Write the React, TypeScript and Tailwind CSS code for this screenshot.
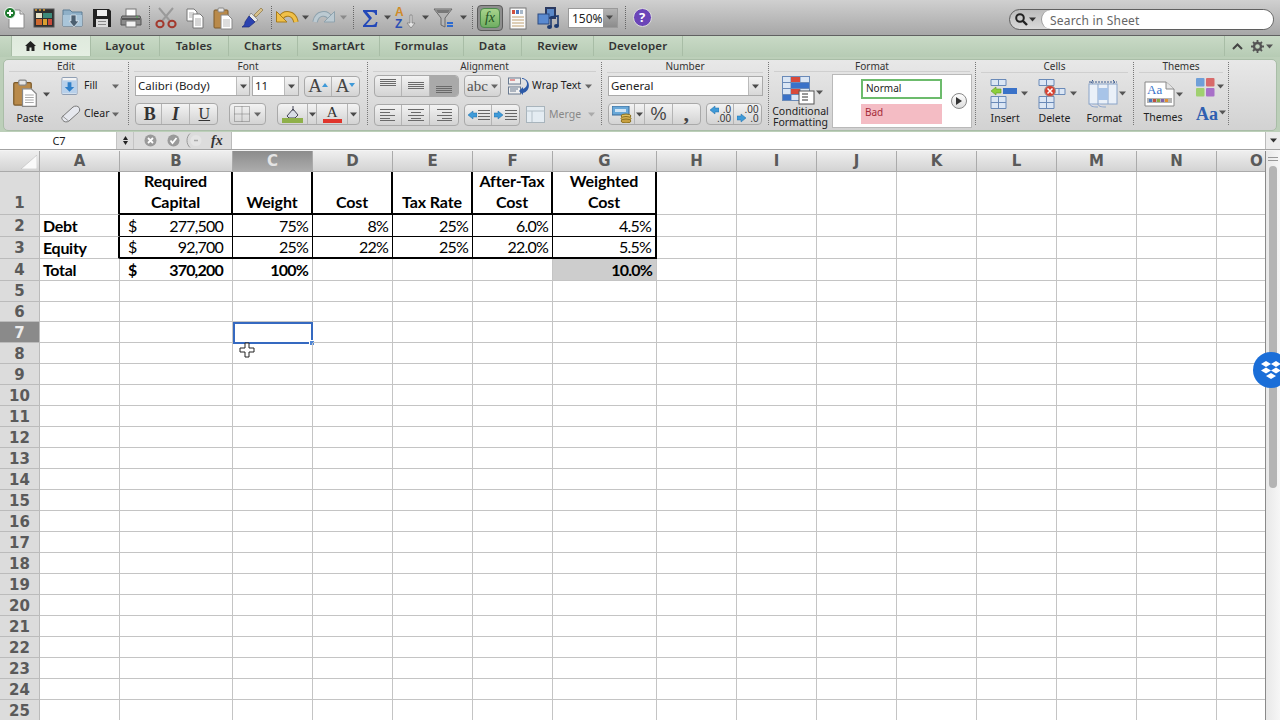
import React from "react";

const Caret = ({ c = "#4a4a4a" }: { c?: string }) => (
  <svg width="7" height="5" viewBox="0 0 7 5"><path d="M0 0.5h7L3.5 4.5z" fill={c} /></svg>
);

const Sep = ({ w }: { w: string }) => (
  <div className={`flex justify-center self-stretch py-[6px] ${w}`}>
    <div className="border-l border-dotted border-[#666]" />
  </div>
);

const Slot = ({ w, children }: { w: string; children: React.ReactNode }) => (
  <div className={`flex items-center justify-center shrink-0 ${w}`}>{children}</div>
);

const I = ({ w = 24, h = 24, children }: { w?: number; h?: number; children: React.ReactNode }) => (
  <svg width={w} height={h} viewBox={`0 0 ${w} ${h}`}>{children}</svg>
);

const NewIcon = () => (
  <I>
    <path d="M6 4h11l4 4v14H6z" fill="#fff" stroke="#8a8a8a" />
    <path d="M17 4v4h4" fill="#ddd" stroke="#8a8a8a" />
    <circle cx="7" cy="7" r="5.5" fill="#1d7a2e" stroke="#fff" />
    <path d="M7 4v6M4 7h6" stroke="#fff" strokeWidth="2" />
  </I>
);
const GalleryIcon = () => (
  <I>
    <rect x="2" y="3" width="20" height="18" fill="#2f2f2f" stroke="#555" />
    <path d="M3 4h2M7 4h2M11 4h2" stroke="#e0a030" strokeWidth="1.5" />
    <rect x="4" y="7" width="6" height="5" fill="#e8e4c8" />
    <rect x="11" y="7" width="9" height="5" fill="#3d8a7a" />
    <rect x="4" y="13" width="6" height="6" fill="#d06a30" />
    <rect x="11" y="13" width="4" height="6" fill="#d9a030" />
    <rect x="16" y="13" width="4" height="6" fill="#c84a3a" />
  </I>
);
const OpenIcon = () => (
  <I>
    <path d="M2 7V4h7l2 2h10v14H2z" fill="#8fb0c8" stroke="#5d7c95" />
    <path d="M2 9h19v11H2z" fill="#a9c5d9" />
    <path d="M10 9h5v6h3l-5 6-5-6h2z" fill="#4c5f70" stroke="#e6eef4" strokeWidth=".7" />
  </I>
);
const SaveIcon = () => (
  <I>
    <path d="M3 3h16l2 2v16H3z" fill="#222" />
    <rect x="7" y="4" width="10" height="6" fill="#eee" />
    <rect x="6" y="13" width="12" height="8" fill="#ddd" />
    <rect x="8" y="15" width="8" height="1" fill="#888" />
    <rect x="8" y="18" width="8" height="1" fill="#888" />
  </I>
);
const PrintIcon = () => (
  <I>
    <rect x="7" y="3" width="10" height="8" fill="#fff" stroke="#777" />
    <path d="M3 10h18l1 3v6H2v-6z" fill="#8c8c8c" stroke="#555" />
    <rect x="3" y="12" width="18" height="2" fill="#555" />
    <rect x="7" y="15" width="10" height="6" fill="#f2f2f2" stroke="#777" />
    <rect x="17" y="10.5" width="2" height="1" fill="#4bb04b" />
  </I>
);
const CutIcon = () => (
  <I>
    <path d="M5 2l11 13M19 2L8 15" stroke="#9a9a9a" strokeWidth="2" />
    <ellipse cx="6" cy="18" rx="3.6" ry="3.2" fill="none" stroke="#a33a2e" strokeWidth="2" />
    <ellipse cx="18" cy="18" rx="3.6" ry="3.2" fill="none" stroke="#a33a2e" strokeWidth="2" />
  </I>
);
const CopyIcon = () => (
  <I>
    <path d="M4 3h7l3 3v9H4z" fill="#fff" stroke="#777" />
    <path d="M10 8h7l3 3v11H10z" fill="#fff" stroke="#777" />
    <path d="M6 7h5M6 9h3M6 11h3M12 13h6M12 15h6M12 17h6M12 19h6" stroke="#999" strokeWidth=".8" />
  </I>
);
const PasteIcon = ({ w = 24, h = 24 }: { w?: number; h?: number }) => (
  <svg width={w} height={h} viewBox="0 0 24 24">
    <rect x="3" y="4" width="14" height="18" rx="1" fill="#b98a4a" stroke="#7c5a2a" />
    <rect x="7" y="2" width="6" height="4" rx="1" fill="#e6e6e6" stroke="#888" />
    <path d="M10 9h7l4 4v10H10z" fill="#fff" stroke="#888" />
    <path d="M12 14h7M12 16h7M12 18h7M12 20h7" stroke="#aaa" strokeWidth=".8" />
  </svg>
);
const BrushIcon = () => (
  <I>
    <path d="M14 9l7-7 2 2-7 7z" fill="#d8c08a" stroke="#8a7440" strokeWidth=".7" />
    <path d="M11 7l7 7-3 2-6-6z" fill="#e8e8e8" stroke="#777" strokeWidth=".7" />
    <path d="M9 10l6 6-6 5H2c2-1 3-3 3-5z" fill="#2c43b0" stroke="#1c2c7c" strokeWidth=".7" />
  </I>
);
const UndoIcon = () => (
  <I w={26} h={22}>
    <path d="M7 11C10 5 20 5 22 15" fill="none" stroke="#a87c1c" strokeWidth="5.500" />
    <path d="M7 11C10 5 20 5 22 15" fill="none" stroke="#f0c048" strokeWidth="3.500" />
    <path d="M2.500 4.500v10.500h10.500z" fill="#f0c048" stroke="#a87c1c" />
  </I>
);
const RedoIcon = () => (
  <I w={26} h={22}>
    <path d="M19 11C16 5 6 5 4 15" fill="none" stroke="#8ea2ad" strokeWidth="5.500" />
    <path d="M19 11C16 5 6 5 4 15" fill="none" stroke="#bccad2" strokeWidth="3.500" />
    <path d="M23.500 4.500v10.500H13z" fill="#bccad2" stroke="#8ea2ad" />
  </I>
);
const SigmaIcon = () => (
  <I w={20} h={22}>
    <path d="M3 3h14v5h-1.500c-.5-2-1.500-3-4-3H7l5 6-6 7h6c2.500 0 3.500-1 4-3H17.500L16.500 20H3v-1.500L9 12 3 4.500z" fill="#2348b8" />
  </I>
);
const SortIcon = () => (
  <svg width="24" height="26" viewBox="0 0 24 26">
    <text x="1" y="11" fontSize="12" fontWeight="700" fontFamily="Liberation Sans" fill="#d08a28">A</text>
    <text x="1" y="23" fontSize="12" fontWeight="700" fontFamily="Liberation Sans" fill="#2c50b4">Z</text>
    <path d="M16 10h2v8h3l-4 5-4-5h3z" fill="#e4e4e4" stroke="#777" strokeWidth=".7" />
  </svg>
);
const FilterIcon = () => (
  <I w={22} h={22}>
    <path d="M1 2h18l-7 9v9l-4-2v-7z" fill="#b4b4b4" stroke="#6a6a6a" />
    <path d="M3 3h14l-2 3H5z" fill="#777" />
    <path d="M14 16h6M14 19h6" stroke="#2c6ad0" strokeWidth="2" />
  </I>
);
const DocIcon = () => (
  <I>
    <rect x="4" y="2" width="16" height="21" fill="#fbfbfb" stroke="#777" />
    <rect x="6" y="4" width="3" height="4" fill="#d05040" />
    <rect x="10" y="4" width="3" height="4" fill="#4a78c0" />
    <rect x="14" y="4" width="3" height="4" fill="#a8b8c8" />
    <path d="M6 11h12M6 14h12M6 17h12M6 20h12" stroke="#bfa070" strokeWidth="1" />
  </I>
);
const MediaIcon = () => (
  <I w={26} h={26}>
    <rect x="9" y="2" width="11" height="12" fill="#2c3a60" />
    <rect x="11" y="4" width="7" height="8" fill="#5a88c8" />
    <rect x="2" y="9" width="11" height="10" fill="#5a8ad0" stroke="#2c4a80" />
    <path d="M15 22V12l7-1v10" fill="none" stroke="#1c3a70" strokeWidth="1.600" />
    <ellipse cx="13.500" cy="22" rx="2.500" ry="2" fill="#1c3a70" />
    <ellipse cx="20.500" cy="21" rx="2.500" ry="2" fill="#1c3a70" />
  </I>
);

const BtnGroup = ({ cls = "", children }: { cls?: string; children: React.ReactNode }) => (
  <div className={`flex rounded-[4px] border border-[#a9a9a9] bg-gradient-to-b from-[#f3f3f3] to-[#d3d3d3] divide-x divide-[#b4b4b4] overflow-hidden ${cls}`}>
    {children}
  </div>
);
const Cbtn = ({ w, cls = "", children }: { w: string; cls?: string; children?: React.ReactNode }) => (
  <div className={`flex items-center justify-center h-full ${w} ${cls}`}>{children}</div>
);

const Lines = ({ a }: { a: "l" | "c" | "r" | "t" | "m" | "b" }) => {
  const rows =
    a === "l" ? ["M1 1.500h15", "M1 4.500h10", "M1 7.500h15", "M1 10.500h10", "M1 12.500h15"] :
    a === "c" ? ["M1 1.500h16", "M4 4.500h10", "M1 7.500h16", "M4 10.500h10", "M1 12.500h16"] :
    a === "r" ? ["M2 1.500h15", "M7 4.500h10", "M2 7.500h15", "M7 10.500h10", "M2 12.500h15"] :
    a === "t" ? ["M1 0.500h16", "M1 2.500h16", "M1 4.500h16", "M1 6.500h16"] :
    a === "m" ? ["M1 3.500h16", "M1 5.500h16", "M1 7.500h16", "M1 9.500h16"] :
    ["M1 7.500h16", "M1 9.500h16", "M1 11.500h16", "M1 13.500h16"];
  return (
    <svg width="18" height="14" viewBox="0 0 18 14">
      {rows.map((d) => <path key={d} d={d} stroke="#6a6a6a" strokeWidth="1" />)}
    </svg>
  );
};

const Group = ({ w, title, sep = true, children }: { w: string; title: string; sep?: boolean; children: React.ReactNode }) => (
  <div className={`flex flex-col shrink-0 ${w} ${sep ? "border-r border-dotted border-[#777]" : ""}`}>
    <div className="mx-[5px] h-[11px] border-b border-[#cfcfcf] text-center text-[10px] leading-[9px] text-[#333]">{title}</div>
    {children}
  </div>
);

const Arrow = ({ d }: { d: string }) => (
  <svg width="10" height="10" viewBox="0 0 10 10"><path d={d} fill="#3f9ad8" stroke="#1f6fa8" strokeWidth=".5" /></svg>
);

const colLetters = ["A", "B", "C", "D", "E", "F", "G", "H", "I", "J", "K", "L", "M", "N", "O"];

type Cell = { t?: string; t2?: string; cur?: string; b?: boolean; al?: "r" | "c" | "l"; bg?: string };

const data: Record<string, Cell> = {
  "1B": { t: "Required", t2: "Capital", b: true, al: "c" },
  "1C": { t: "Weight", b: true, al: "c" },
  "1D": { t: "Cost", b: true, al: "c" },
  "1E": { t: "Tax Rate", b: true, al: "c" },
  "1F": { t: "After-Tax", t2: "Cost", b: true, al: "c" },
  "1G": { t: "Weighted", t2: "Cost", b: true, al: "c" },
  "2A": { t: "Debt", b: true, al: "l" },
  "2B": { t: "277,500", cur: "$", al: "r" },
  "2C": { t: "75%", al: "r" },
  "2D": { t: "8%", al: "r" },
  "2E": { t: "25%", al: "r" },
  "2F": { t: "6.0%", al: "r" },
  "2G": { t: "4.5%", al: "r" },
  "3A": { t: "Equity", b: true, al: "l" },
  "3B": { t: "92,700", cur: "$", al: "r" },
  "3C": { t: "25%", al: "r" },
  "3D": { t: "22%", al: "r" },
  "3E": { t: "25%", al: "r" },
  "3F": { t: "22.0%", al: "r" },
  "3G": { t: "5.5%", al: "r" },
  "4A": { t: "Total", b: true, al: "l" },
  "4B": { t: "370,200", cur: "$", b: true, al: "r" },
  "4C": { t: "100%", b: true, al: "r" },
  "4G": { t: "10.0%", b: true, al: "r", bg: "bg-[#cdcdcd]" },
};

const inTable = (c: string) => "BCDEFG".includes(c);

function borderCls(r: number, c: string) {
  let right = "border-r border-r-[#c4c4c4]";
  let bottom = "border-b border-b-[#c4c4c4]";
  if (r >= 1 && r <= 3) {
    if (c === "A" || c === "G") right = "border-r-2 border-r-black";
    else if (inTable(c)) right = r === 1 ? "border-r-2 border-r-black" : "border-r border-r-black";
    if (inTable(c)) {
      if (r === 1 || r === 3) bottom = "border-b-2 border-b-black";
      else bottom = "border-b border-b-black";
    }
  }
  return `${right} ${bottom}`;
}

function CellView({ r, c }: { r: number; c: string }) {
  const d = data[`${r}${c}`];
  const sel = r === 7 && c === "C";
  let pad = "pl-[3px] pr-[4px]";
  if (c === "B") pad = "pl-[8px] pr-[9px]";
  if (r === 1) pad = "";
  const just = d?.al === "r" ? "justify-end" : d?.al === "c" ? "justify-center" : "justify-start";
  const track = d?.al === "r" ? "tracking-[-0.8px]" : d?.al === "l" ? "tracking-[-0.3px]" : "tracking-[-0.1px]";
  return (
    <div className={`relative flex items-end leading-[21px] min-w-0 text-[16px] text-black font-['Lato',sans-serif] ${d?.b ? "font-bold" : "font-normal"} ${d?.bg ?? ""} ${borderCls(r, c)}`}>
      {d && !d.t2 && (
        <div className={`flex w-full ${just} ${pad} ${r === 1 ? "pb-[1px]" : ""}`}>
          {d.cur && <span className="mr-auto">{d.cur}</span>}
          <span className={`whitespace-nowrap ${track}`}>{d.t}</span>
        </div>
      )}
      {d?.t2 && (
        <div className="w-full pb-[1px] text-center whitespace-nowrap tracking-[-0.1px]">
          <div>{d.t}</div>
          <div>{d.t2}</div>
        </div>
      )}
      {sel && (
        <div className="absolute left-0 top-0 w-[80px] h-[22px] border-2 border-[#3569c0]">
          <div className="absolute right-[-4px] bottom-[-4px] w-[6px] h-[6px] bg-[#4f86d6] border border-white" />
        </div>
      )}
    </div>
  );
}

export default function App() {
  const rows = Array.from({ length: 25 }, (_, i) => i + 1);
  return (
    <div className="relative w-[1280px] h-[720px] overflow-hidden bg-white font-['Noto_Sans',sans-serif] text-[#222]">
      {/* Standard toolbar */}
      <div className="flex items-center h-[36px] bg-gradient-to-b from-[#d0d0d0] to-[#a7a7a7] border-b border-[#616161]">
        <Slot w="w-[30px]"><NewIcon /></Slot>
        <Slot w="w-[28px]"><GalleryIcon /></Slot>
        <Slot w="w-[30px]"><OpenIcon /></Slot>
        <Slot w="w-[28px]"><SaveIcon /></Slot>
        <Slot w="w-[30px]"><PrintIcon /></Slot>
        <Sep w="w-[6px]" />
        <Slot w="w-[28px]"><CutIcon /></Slot>
        <Slot w="w-[30px]"><CopyIcon /></Slot>
        <Slot w="w-[26px]"><PasteIcon /></Slot>
        <Slot w="w-[32px]"><BrushIcon /></Slot>
        <Sep w="w-[6px]" />
        <Slot w="w-[26px]"><UndoIcon /></Slot>
        <Slot w="w-[10px]"><Caret /></Slot>
        <Slot w="w-[28px]"><RedoIcon /></Slot>
        <Slot w="w-[10px]"><Caret c="#8a8a8a" /></Slot>
        <Sep w="w-[10px]" />
        <Slot w="w-[24px]"><SigmaIcon /></Slot>
        <Slot w="w-[10px]"><Caret /></Slot>
        <Slot w="w-[28px]"><SortIcon /></Slot>
        <Slot w="w-[10px]"><Caret /></Slot>
        <Slot w="w-[28px]"><FilterIcon /></Slot>
        <Slot w="w-[10px]"><Caret /></Slot>
        <Sep w="w-[9px]" />
        <div className="flex items-center justify-center w-[26px] h-[26px] rounded-[4px] border border-[#5c5c5c] bg-[#8e8e8e] shrink-0">
          <div className="flex items-center justify-center w-[20px] h-[20px] rounded-[4px] border border-[#4c8a4c] bg-gradient-to-b from-[#a8d48c] to-[#6fae62] font-['Liberation_Serif',serif] italic text-[14px] text-[#1f4f1f]">fx</div>
        </div>
        <Slot w="w-[30px]"><DocIcon /></Slot>
        <Slot w="w-[32px]"><MediaIcon /></Slot>
        <div className="flex ml-[3px] w-[50px] h-[20px] shrink-0 border border-[#9a9a9a] bg-white">
          <div className="flex-1 text-[12px] leading-[19px] pl-[3px] text-[#222]">150%</div>
          <div className="flex items-center justify-center w-[15px] bg-gradient-to-b from-[#b4b4b4] to-[#8c8c8c]"><Caret /></div>
        </div>
        <Sep w="w-[14px]" />
        <Slot w="w-[20px]">
          <div className="flex items-center justify-center w-[19px] h-[19px] rounded-full border border-[#ddd] bg-[#6b45b8] text-white font-bold text-[13px] leading-none">?</div>
        </Slot>
        <div className="flex-1" />
        <div className="flex items-center w-[265px] h-[21px] mr-[6px] mt-[4px] shrink-0 rounded-full border border-[#5f5f5f] bg-gradient-to-b from-[#bdbdbd] to-[#d9d9d9]">
          <div className="flex items-center w-[31px] pl-[5px] gap-[1px]">
            <svg width="13" height="13" viewBox="0 0 13 13"><circle cx="5" cy="5" r="3.800" fill="none" stroke="#222" strokeWidth="2" /><path d="M8 8l4 4" stroke="#222" strokeWidth="2.400" /></svg>
            <Caret c="#333" />
          </div>
          <div className="flex-1 h-[19px] rounded-full bg-white border-l border-[#999] pl-[8px] text-[12px] leading-[21px] tracking-[0.2px] text-[#666]">Search in Sheet</div>
        </div>
      </div>

      {/* Tabs */}
      <div className="flex items-stretch h-[21px] pl-[11px] pb-[1px] bg-gradient-to-b from-[#c9dac6] to-[#b6cbb4] text-[11.5px] font-semibold tracking-[0.2px] text-[#333]">
        <div className="flex items-center justify-center gap-[7px] w-[80px] bg-gradient-to-b from-[#dfeadd] to-[#e4eee2] border-r border-l border-[#a8bda6] text-[#222]">
          <svg width="11" height="10" viewBox="0 0 11 10"><path d="M5.500 0L11 5H9.500v5H6.500V6.500h-2V10H1.500V5H0z" fill="#222" /></svg>
          <span>Home</span>
        </div>
        <div className="flex items-center justify-center w-[69px] border-r border-[#a8bda6]">Layout</div>
        <div className="flex items-center justify-center w-[69px] border-r border-[#a8bda6]">Tables</div>
        <div className="flex items-center justify-center w-[69px] border-r border-[#a8bda6]">Charts</div>
        <div className="flex items-center justify-center w-[82px] border-r border-[#a8bda6]">SmartArt</div>
        <div className="flex items-center justify-center w-[84px] border-r border-[#a8bda6]">Formulas</div>
        <div className="flex items-center justify-center w-[58px] border-r border-[#a8bda6]">Data</div>
        <div className="flex items-center justify-center w-[72px] border-r border-[#a8bda6]">Review</div>
        <div className="flex items-center justify-center w-[89px] border-r border-[#a8bda6]">Developer</div>
        <div className="flex-1" />
        <div className="flex items-center w-[56px] border-l border-[#a8bda6]">
          <svg className="ml-[7px]" width="11" height="7" viewBox="0 0 11 7"><path d="M1 6l4.500-4.500L10 6" fill="none" stroke="#444" strokeWidth="2" /></svg>
          <svg className="ml-[8px]" width="13" height="13" viewBox="0 0 13 13"><circle cx="6.500" cy="6.500" r="3.500" fill="none" stroke="#555" strokeWidth="2.400" /><path d="M6.500 0v3M6.500 10v3M0 6.500h3M10 6.500h3M2 2l2 2M9 9l2 2M11 2L9 4M4 9l-2 2" stroke="#555" strokeWidth="1.800" /></svg>
          <span className="ml-[2px]"><Caret c="#555" /></span>
        </div>
      </div>

      {/* Ribbon */}
      <div className="h-[75px] bg-[#bccfb9] px-[3px] pt-[2px] pb-[1px]">
        <div className="flex h-full pt-[2px] pb-[5px] rounded-[5px] border border-[#a9bda7] bg-gradient-to-b from-[#e8e8e8] to-[#d2d2d2] text-[#222]">
          {/* Edit */}
          <Group w="w-[125px]" title="Edit">
            <div className="flex">
              <div className="flex flex-col items-center w-[44px] ml-[4px]">
                <div className="flex items-center mt-[5px]">
                  <PasteIcon w={30} h={31} />
                  <span className="ml-[3px] mt-[3px]"><Caret /></span>
                </div>
                <div className="text-[10.5px] leading-[14px] mt-[3px]">Paste</div>
              </div>
              <div className="flex flex-col ml-[9px]">
                <div className="flex items-center h-[26px] mt-[1px]">
                  <svg width="17" height="20" viewBox="0 0 18 20"><rect x="1" y="1" width="16" height="18" rx="1" fill="#f4f4f4" stroke="#8a9ab0" /><rect x="1" y="4" width="16" height="14" fill="#b8d0ea" /><path d="M7 6h4v5h3l-5 5-5-5h3z" fill="#2f7fc8" /></svg>
                  <span className="ml-[6px] w-[28px] text-[10.5px]">Fill</span>
                  <Caret c="#666" />
                </div>
                <div className="flex items-center h-[28px] mt-[1px]">
                  <svg width="20" height="18" viewBox="0 0 20 18"><path d="M1 12L12 2c2-1.500 5-1 6 .5s1 3.500-.5 5L8 16c-2 1.500-5 1-6-.5s-1.500-2 -1-3.500z" fill="#e6e8ee" stroke="#777" /><path d="M1.500 11l6 5" stroke="#999" /></svg>
                  <span className="ml-[3px] w-[28px] text-[10.5px]">Clear</span>
                  <Caret c="#666" />
                </div>
              </div>
            </div>
          </Group>

          {/* Font */}
          <Group w="w-[239px]" title="Font">
            <div className="pl-[6px] pt-[4px] flex flex-col gap-[6px]">
              <div className="flex items-start">
                <div className="flex h-[20px] w-[115px] border border-[#aaa] bg-white">
                  <div className="flex-1 text-[11.5px] leading-[18px] pl-[2px]">Calibri (Body)</div>
                  <div className="flex items-center justify-center w-[13px] border-l border-[#bbb] bg-gradient-to-b from-[#f3f3f3] to-[#d8d8d8]"><Caret /></div>
                </div>
                <div className="flex h-[20px] w-[47px] ml-[2px] border border-[#aaa] bg-white">
                  <div className="flex-1 text-[11.5px] leading-[18px] pl-[2px]">11</div>
                  <div className="flex items-center justify-center w-[14px] border-l border-[#bbb] bg-gradient-to-b from-[#f3f3f3] to-[#d8d8d8]"><Caret /></div>
                </div>
                <BtnGroup cls="ml-[5px] h-[21px]">
                  <Cbtn w="w-[27px]"><span className="font-['Liberation_Serif',serif] text-[19px] text-[#444]">A</span><svg className="mb-[3px]" width="6" height="4" viewBox="0 0 6 4"><path d="M3 0l3 4H0z" fill="#3f9ad8" /></svg></Cbtn>
                  <Cbtn w="w-[27px]"><span className="font-['Liberation_Serif',serif] text-[19px] text-[#444]">A</span><svg className="mb-[3px]" width="6" height="4" viewBox="0 0 6 4"><path d="M0 0h6L3 4z" fill="#3f9ad8" /></svg></Cbtn>
                </BtnGroup>
              </div>
              <div className="flex items-start">
                <BtnGroup cls="h-[22px] w-[83px]">
                  <Cbtn w="w-[27px]" cls="pl-[2px]"><span className="font-['Liberation_Serif',serif] font-bold text-[18px] text-[#333]">B</span></Cbtn>
                  <Cbtn w="w-[28px]"><span className="font-['Liberation_Serif',serif] italic font-bold text-[18px] text-[#333]">I</span></Cbtn>
                  <Cbtn w="w-[28px]" cls="pl-[2px]"><span className="font-['Liberation_Serif',serif] underline text-[16px] text-[#333]">U</span></Cbtn>
                </BtnGroup>
                <BtnGroup cls="ml-[11px] h-[22px] w-[37px]">
                  <div className="flex items-center justify-center gap-[4px] w-full">
                    <svg width="16" height="16" viewBox="0 0 16 16"><path d="M.5.500h15v15H.5zM8 .5v15M.5 8h15" fill="none" stroke="#777" strokeDasharray="1 1" /></svg>
                    <Caret c="#666" />
                  </div>
                </BtnGroup>
                <BtnGroup cls="ml-[11px] h-[22px] w-[83px]">
                  <Cbtn w="w-[31px]">
                    <svg width="21" height="18" viewBox="0 0 21 18"><path d="M5 11l6-7 5 6-3 3H7z" fill="#d8dde6" stroke="#445" /><path d="M11 1v5" stroke="#445" /><rect x="0" y="13" width="21" height="5" fill="#8fb04a" /></svg>
                  </Cbtn>
                  <Cbtn w="w-[9px]"><Caret /></Cbtn>
                  <Cbtn w="w-[32px]">
                    <div className="flex flex-col items-center font-['Liberation_Serif',serif] text-[15px] leading-[13px] text-[#333]">A<div className="w-[19px] h-[4px] bg-[#e0352c]" /></div>
                  </Cbtn>
                  <Cbtn w="w-[11px]"><Caret /></Cbtn>
                </BtnGroup>
              </div>
            </div>
          </Group>

          {/* Alignment */}
          <Group w="w-[234px]" title="Alignment">
            <div className="pl-[6px] pt-[3px] flex flex-col gap-[6px]">
              <div className="flex items-center h-[22px]">
                <BtnGroup cls="h-[22px] w-[85px]">
                  <Cbtn w="w-[28px]"><Lines a="t" /></Cbtn>
                  <Cbtn w="w-[28px]"><Lines a="m" /></Cbtn>
                  <Cbtn w="w-[29px]" cls="bg-[#a9a9a9]"><Lines a="b" /></Cbtn>
                </BtnGroup>
                <BtnGroup cls="ml-[5px] h-[22px] w-[37px]">
                  <div className="flex items-center justify-center gap-[3px] w-full font-['Liberation_Serif',serif] text-[15px] text-[#555]">abc<Caret c="#666" /></div>
                </BtnGroup>
                <svg className="ml-[7px]" width="21" height="20" viewBox="0 0 21 20"><rect x=".5" y="2" width="12" height="6" fill="#f0f0f0" stroke="#6a7a90" /><path d="M2 4h5" stroke="#d04040" /><rect x=".5" y="11" width="12" height="7" fill="#f0f0f0" stroke="#6a7a90" /><path d="M2 13h8M2 15h6" stroke="#6a7a90" /><path d="M14 3c6 0 7 8 1 10v-2l-4 4 4 4v-2c8-2 8-14-1-15z" fill="#2c5aa8" /></svg>
                <span className="ml-[3px] text-[10.5px] w-[52px] whitespace-nowrap">Wrap Text</span>
                <span className="ml-[1px]"><Caret c="#666" /></span>
              </div>
              <div className="flex items-center h-[23px]">
                <BtnGroup cls="h-[22px] w-[85px]">
                  <Cbtn w="w-[28px]"><Lines a="l" /></Cbtn>
                  <Cbtn w="w-[28px]"><Lines a="c" /></Cbtn>
                  <Cbtn w="w-[29px]"><Lines a="r" /></Cbtn>
                </BtnGroup>
                <BtnGroup cls="ml-[5px] h-[22px] w-[56px]">
                  <Cbtn w="w-[28px]"><Arrow d="M6 1v2h4v4H6v2L1 5z" /><span className="ml-[1px]"><svg width="12" height="12" viewBox="0 0 12 12"><path d="M0 1.500h12M0 4.500h12M0 7.500h12M0 10.500h12" stroke="#666" /></svg></span></Cbtn>
                  <Cbtn w="w-[28px]"><Arrow d="M4 1v2H0v4h4v2l5-4z" /><span className="ml-[1px]"><svg width="12" height="12" viewBox="0 0 12 12"><path d="M0 1.500h12M0 4.500h12M0 7.500h12M0 10.500h12" stroke="#666" /></svg></span></Cbtn>
                </BtnGroup>
                <svg className="ml-[6px]" width="19" height="17" viewBox="0 0 19 17"><rect x=".5" y=".5" width="18" height="16" fill="#e4ecf2" stroke="#a8b4bc" /><path d="M.5 5h18M6 5v11" stroke="#b4c0c8" /></svg>
                <span className="ml-[4px] text-[10.5px] text-[#888]">Merge</span>
                <span className="ml-[7px]"><Caret c="#aaa" /></span>
              </div>
            </div>
          </Group>

          {/* Number */}
          <Group w="w-[167px]" title="Number">
            <div className="pl-[6px] pt-[3px] flex flex-col gap-[7px]">
              <div className="flex h-[20px] w-[155px] border border-[#aaa] bg-white">
                <div className="flex-1 text-[11.5px] leading-[18px] pl-[2px]">General</div>
                <div className="flex items-center justify-center w-[14px] border-l border-[#bbb] bg-gradient-to-b from-[#f3f3f3] to-[#d8d8d8]"><Caret /></div>
              </div>
              <div className="flex">
                <BtnGroup cls="h-[22px] w-[93px]">
                  <Cbtn w="w-[27px]">
                    <svg width="20" height="17" viewBox="0 0 20 17"><rect x="0" y="0" width="17" height="9" fill="#69a8d8" stroke="#3a6a98" /><rect x="3" y="3" width="11" height="3" fill="#cfe4f4" /><ellipse cx="14" cy="10" rx="5" ry="2" fill="#e0c060" stroke="#8a7020" /><ellipse cx="14" cy="12.500" rx="5" ry="2" fill="#d4b050" stroke="#8a7020" /><ellipse cx="14" cy="15" rx="5" ry="2" fill="#c8a040" stroke="#8a7020" /></svg>
                  </Cbtn>
                  <Cbtn w="w-[10px]"><Caret /></Cbtn>
                  <Cbtn w="w-[28px]"><span className="font-['Liberation_Sans',sans-serif] text-[18px] text-[#444]">%</span></Cbtn>
                  <Cbtn w="w-[28px]"><span className="font-['Liberation_Serif',serif] font-bold text-[22px] leading-[14px] text-[#444]">,</span></Cbtn>
                </BtnGroup>
                <BtnGroup cls="ml-[5px] h-[22px] w-[56px]">
                  <Cbtn w="w-[28px]"><div className="relative w-[22px] h-[18px] font-['Liberation_Sans',sans-serif] text-[10px] leading-[9px] text-[#333] text-right"><div className="absolute left-0 top-0"><Arrow d="M6 1v2h4v4H6v2L1 5z" /></div>.0<br />.00</div></Cbtn>
                  <Cbtn w="w-[28px]"><div className="relative w-[22px] h-[18px] font-['Liberation_Sans',sans-serif] text-[10px] leading-[9px] text-[#333] text-right"><div className="absolute left-0 bottom-0"><Arrow d="M4 1v2H0v4h4v2l5-4z" /></div>.00<br />.0</div></Cbtn>
                </BtnGroup>
              </div>
            </div>
          </Group>

          {/* Format */}
          <Group w="w-[207px]" title="Format">
            <div className="flex">
              <div className="flex flex-col items-center w-[63px]">
                <div className="flex items-center mt-[4px] ml-[3px]">
                  <svg width="33" height="29" viewBox="0 0 33 29">
                    <rect x=".5" y=".5" width="27" height="24" fill="#dbe6f4" stroke="#6a8ab8" />
                    <path d="M9 .5v24M18 .5v24M.5 6.500h27M.5 12.500h27M.5 18.500h27" stroke="#6a8ab8" />
                    <rect x="9" y="1" width="9" height="5" fill="#d84a3a" />
                    <rect x="9" y="7" width="18" height="5" fill="#3a72c8" />
                    <rect x="9" y="13" width="9" height="5" fill="#d84a3a" />
                    <rect x="1" y="19" width="8" height="5" fill="#3a72c8" />
                    <rect x="17" y="15" width="15" height="13" fill="#fff" stroke="#555" />
                    <path d="M20 18h6M20 21h6M20 24h6" stroke="#333" />
                  </svg>
                  <span className="ml-[1px] mt-[3px]"><Caret c="#555" /></span>
                </div>
                <div className="text-[10.5px] leading-[11px] text-center mt-[1px]">Conditional<br />Formatting</div>
              </div>
              <div className="flex items-center h-[54px] w-[140px] mt-[2px] border border-[#b9b9b9] bg-white">
                <div className="flex flex-col gap-[5px] ml-[28px] w-[81px]">
                  <div className="h-[20px] border-2 border-[#6cbb6c] pl-[3px] text-[10px] leading-[15px] text-[#222]">Normal</div>
                  <div className="h-[20px] bg-[#f4bcc4] pl-[4px] text-[10px] leading-[16px] text-[#a52a38]">Bad</div>
                </div>
                <div className="flex items-center justify-center w-[16px] h-[16px] ml-[9px] rounded-full border border-[#888] bg-gradient-to-b from-white to-[#ddd]">
                  <svg width="6" height="8" viewBox="0 0 6 8"><path d="M0 0l6 4-6 4z" fill="#333" /></svg>
                </div>
              </div>
            </div>
          </Group>

          {/* Cells */}
          <Group w="w-[158px]" title="Cells">
            <div className="flex pl-[9px]">
              <div className="flex flex-col items-center w-[50px]">
                <div className="flex items-center mt-[5px] h-[31px] mr-[2px]">
                  <svg width="28" height="30" viewBox="0 0 28 30">
                    <path d="M1 .5h15v6H1zM8.500 .5v6" fill="#dbe6f4" stroke="#6a8ab8" />
                    <path d="M1 17.500h15v12H1zM8.500 17.500v12M1 23.500h15" fill="#dbe6f4" stroke="#6a8ab8" />
                    <rect x="13" y="9" width="14" height="6" fill="#3a72c8" />
                    <path d="M1 12l5-4v2h5v4H6v2z" fill="#8ccf3c" stroke="#5a9a20" strokeWidth=".6" />
                  </svg>
                  <span className="ml-[3px] mb-[1px]"><Caret c="#555" /></span>
                </div>
                <div className="text-[10.5px] leading-[14px] mt-[2px] mr-[9px]">Insert</div>
              </div>
              <div className="flex flex-col items-center w-[50px]">
                <div className="flex items-center mt-[5px] h-[31px] mr-[2px]">
                  <svg width="28" height="30" viewBox="0 0 28 30">
                    <path d="M1 .5h15v6H1zM8.500 .5v6" fill="#dbe6f4" stroke="#6a8ab8" />
                    <path d="M1 17.500h15v12H1zM8.500 17.500v12M1 23.500h15" fill="#dbe6f4" stroke="#6a8ab8" />
                    <path d="M16 9.500h11v6H16zM21 9.500v6" fill="#dbe6f4" stroke="#6a8ab8" />
                    <circle cx="12" cy="12" r="5.500" fill="#d84030" stroke="#999" />
                    <path d="M9.500 9.500l5 5M14.500 9.500l-5 5" stroke="#fff" strokeWidth="1.500" />
                  </svg>
                  <span className="ml-[4px] mb-[1px]"><Caret c="#555" /></span>
                </div>
                <div className="text-[10.5px] leading-[14px] mt-[2px] mr-[9px]">Delete</div>
              </div>
              <div className="flex flex-col items-center w-[50px]">
                <div className="flex items-center mt-[5px] h-[31px] mr-[2px]">
                  <svg width="30" height="30" viewBox="0 0 30 30">
                    <path d="M1 3h28M5 1l-2 2 2 2M25 1l2 2-2 2" stroke="#3a5a90" fill="none" strokeDasharray="2 1" />
                    <rect x="1" y="5" width="28" height="20" fill="#eaf0f8" stroke="#8aa4c8" />
                    <path d="M10 5v20M20 5v20" stroke="#8aa4c8" />
                    <rect x="10" y="9" width="10" height="12" fill="#a8c4e8" />
                    <path d="M2 25c0 3 6 3 8 3M10 25c0 3 6 3 8 3" fill="#dde" stroke="#8aa4c8" />
                  </svg>
                  <span className="ml-[1px] mb-[1px]"><Caret c="#555" /></span>
                </div>
                <div className="text-[10.5px] leading-[14px] mt-[2px] mr-[8px]">Format</div>
              </div>
            </div>
          </Group>

          {/* Themes */}
          <Group w="w-[95px]" title="Themes">
            <div className="flex pl-[4px]">
              <div className="flex flex-col items-center w-[50px]">
                <div className="flex items-center mt-[7px] h-[28px]">
                  <svg width="31" height="26" viewBox="0 0 31 26">
                    <path d="M1 1h21l8 7v17H1z" fill="#fff" stroke="#888" />
                    <path d="M22 1v7h8" fill="#e4e4e4" stroke="#888" />
                    <text x="3" y="13" fontSize="13" fontFamily="Liberation Serif" fill="#3a72c8">Aa</text>
                    <rect x="3" y="17" width="25" height="5" fill="#b4b4b4" />
                    <rect x="5" y="18" width="3" height="3" fill="#4a78c0" /><rect x="9" y="18" width="3" height="3" fill="#c05040" /><rect x="13" y="18" width="3" height="3" fill="#8aa840" /><rect x="17" y="18" width="3" height="3" fill="#8060a8" /><rect x="21" y="18" width="3" height="3" fill="#e09030" />
                  </svg>
                  <span className="ml-[1px]"><Caret c="#555" /></span>
                </div>
                <div className="text-[10.5px] leading-[14px] mt-[2px]">Themes</div>
              </div>
              <div className="flex flex-col ml-[8px]">
                <div className="flex items-center mt-[5px]">
                  <svg width="19" height="19" viewBox="0 0 19 19"><rect x="0" y="0" width="8.500" height="8.500" rx="1" fill="#6f9fd8" /><rect x="10" y="0" width="8.500" height="8.500" rx="1" fill="#d86a6a" /><rect x="0" y="10" width="8.500" height="8.500" rx="1" fill="#a0d070" /><rect x="10" y="10" width="8.500" height="8.500" rx="1" fill="#a870c8" /></svg>
                  <span className="ml-[2px] mb-[2px]"><Caret c="#555" /></span>
                </div>
                <div className="flex items-center mt-[7px]">
                  <span className="font-['Liberation_Serif',serif] font-bold text-[18px] leading-[20px] text-[#2f5fb0]">Aa</span>
                  <span className="ml-[1px] mb-[4px]"><Caret c="#555" /></span>
                </div>
              </div>
            </div>
          </Group>
        </div>
      </div>

      {/* Formula bar */}
      <div className="flex h-[18px] bg-white border-b border-[#a3a3a3] text-[11px]">
        <div className="w-[116px] text-center leading-[17px] pl-[2px] text-[#222]">C7</div>
        <div className="flex flex-col items-center justify-center gap-[1px] w-[17px] bg-[#dcdcdc] border-l border-[#c4c4c4]">
          <svg width="5" height="4" viewBox="0 0 5 4"><path d="M2.500 0L5 4H0z" fill="#222" /></svg>
          <svg width="5" height="4" viewBox="0 0 5 4"><path d="M0 0h5L2.500 4z" fill="#222" /></svg>
        </div>
        <div className="flex items-center w-[99px] bg-[#dcdcdc] border-l border-[#c4c4c4] border-r border-r-[#bbb] pl-[10px]">
          <svg width="13" height="13" viewBox="0 0 13 13"><circle cx="6.500" cy="6.500" r="6" fill="#9a9a9a" /><path d="M4 4l5 5M9 4l-5 5" stroke="#fff" strokeWidth="1.800" /></svg>
          <svg className="ml-[10px]" width="13" height="13" viewBox="0 0 13 13"><circle cx="6.500" cy="6.500" r="6" fill="#9a9a9a" /><path d="M3.500 6.500l2 2.500 4-5" stroke="#fff" strokeWidth="1.800" fill="none" /></svg>
          <svg className="ml-[6px]" width="18" height="15" viewBox="0 0 18 15"><path d="M4 .5C0 4 0 11 4 14.500" fill="none" stroke="#999" /><circle cx="10" cy="7.500" r="5.500" fill="#e4e4e4" /><path d="M8 7.500h4" stroke="#aaa" strokeWidth="1.500" /></svg>
          <span className="ml-[7px] font-['Liberation_Serif',serif] italic font-bold text-[14px] text-[#333]">fx</span>
        </div>
        <div className="flex-1" />
        <div className="flex items-center justify-center w-[15px] border-l border-[#bbb] bg-[#ececec]"><Caret c="#333" /></div>
      </div>
      <div className="h-px bg-[#f4f4f4]" />

      {/* Sheet */}
      <div className="flex">
        <div className="grid w-[1265px] overflow-hidden grid-cols-[40px_80px_113px_80px_80px_80px_80px_104px_80px_80px_80px_80px_80px_80px_80px_80px] grid-rows-[21px_43px_22px_22px_22px_21px_20px] auto-rows-[21px]">
          <div className="relative bg-gradient-to-b from-[#efefef] to-[#d3d3d3] border-r border-b border-[#aaa]">
            <svg className="absolute right-[2px] bottom-[2px]" width="16" height="14" viewBox="0 0 16 14"><path d="M16 0v14H0z" fill="#fafafa" stroke="#b4b4b4" strokeWidth=".5" /></svg>
          </div>
          {colLetters.map((c) => (
            <div
              key={c}
              className={`flex items-center justify-center pt-[1px] font-['DejaVu_Sans',sans-serif] font-bold text-[15px] border-r border-b border-[#aaa] ${c === "C" ? "bg-gradient-to-b from-[#8c8c8c] to-[#acacac] text-[#e4e4e4]" : "bg-gradient-to-b from-[#efefef] to-[#d3d3d3] text-[#5a5a5a]"}`}
            >
              {c}
            </div>
          ))}
          {rows.map((r) => (
            <React.Fragment key={r}>
              <div className={`flex items-end justify-center font-['DejaVu_Sans',sans-serif] font-bold text-[15px] border-r border-b border-[#bbb] ${r === 1 ? "leading-[22px]" : r >= 6 ? "leading-[18px]" : "leading-[20px]"} ${r === 7 ? "bg-[#8a8a8a] text-[#ececec]" : "bg-[#dcdcdc] text-[#5a5a5a]"}`}>
                {r}
              </div>
              {colLetters.map((c) => <CellView key={c} r={r} c={c} />)}
            </React.Fragment>
          ))}
        </div>
        <div className="flex flex-col items-center w-[15px] bg-gradient-to-r from-[#e8e8e8] to-[#f6f6f6] border-l border-[#8a8a8a]">
          <div className="w-full h-[12px] mt-[2px] flex flex-col gap-[2px] justify-center items-center">
            <div className="w-[10px] h-px bg-[#999]" />
            <div className="w-[10px] h-px bg-[#999]" />
          </div>
          <div className="w-[8px] h-[322px] mt-[1px] rounded-full bg-[#b4b4b4]" />
        </div>
      </div>

      {/* Cursor */}
      <svg className="absolute left-[239px] top-[342px]" width="16" height="16" viewBox="0 0 16 16">
        <path d="M6 1h4v5h5v4h-5v5H6v-5H1V6h5z" fill="#fff" stroke="#222" />
      </svg>
      {/* Dropbox badge */}
      <div className="absolute left-[1253px] top-[352px] flex items-center justify-center w-[36px] h-[36px] rounded-full bg-[#1a6ed8]">
        <svg width="22" height="20" viewBox="0 0 22 20"><path d="M6 1l5 3-5 3-5-3zM16 1l5 3-5 3-5-3zM6 7.500l5 3-5 3-5-3zM16 7.500l5 3-5 3-5-3zM11 13l5 3-5 3-5-3z" fill="#fff" /></svg>
      </div>
    </div>
  );
}
